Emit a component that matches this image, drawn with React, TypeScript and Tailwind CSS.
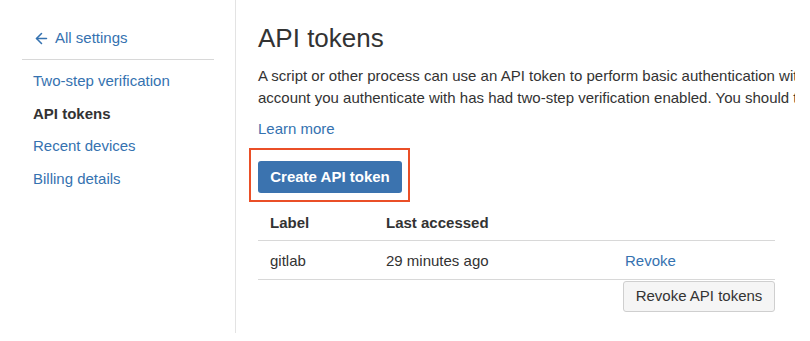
import { ArrowLeft } from "lucide-react";

const font = "font-['Liberation_Sans',Arial,sans-serif]";

export default function App() {
  return (
    <div className={`flex h-[341px] w-[810px] overflow-hidden bg-white text-[15px] text-[#333] ${font}`}>
      {/* Sidebar */}
      <aside className="h-[333px] w-[236px] shrink-0 border-r border-[#e3e3e3] pl-[22px] pr-[21px] pt-[28px]">
        <a className="flex items-center gap-[5px] pl-[11px] leading-[20px] text-[#3572b0]">
          <ArrowLeft className="h-[17px] w-[17px]" strokeWidth={2.2} />
          <span>All settings</span>
        </a>
        <div className="mt-[11px] border-t border-[#d8d8d8]" />
        <nav className="flex flex-col gap-[12.5px] pl-[11px] pt-[11px] leading-[20px]">
          <a className="text-[#3572b0]">Two-step verification</a>
          <span className="font-bold text-[#333]">API tokens</span>
          <a className="text-[#3572b0]">Recent devices</a>
          <a className="text-[#3572b0]">Billing details</a>
        </nav>
      </aside>

      {/* Main */}
      <main className="w-[559px] shrink-0 overflow-hidden pl-[22px] pt-[22px]">
        <h1 className="text-[26px] leading-[32px] text-[#333]">API tokens</h1>
        <p className="mt-[11px] leading-[22px]">
          <span className="block whitespace-nowrap">
            A script or other process can use an API token to perform basic authentication with Jira Cloud applications or Confluence Cloud.
          </span>
          <span className="block whitespace-nowrap">
            account you authenticate with has had two-step verification enabled. You should treat API tokens as securely as any other password.
          </span>
        </p>
        <a className="mt-[10px] block leading-[20px] text-[#3572b0]">Learn more</a>

        <div className="-ml-[9px] mt-[9px] inline-block border-2 border-[#ea4f27] pb-[7px] pl-[7px] pr-[6px] pt-[11px]">
          <button className="h-[32px] w-[144px] rounded-[3px] bg-[#3b73af] font-bold text-white">
            Create API token
          </button>
        </div>

        <div className="w-[517px]">
          <table className="w-full border-collapse text-left">
            <thead>
              <tr className="h-[38px] border-b border-[#d8d8d8]">
                <th className="w-[116px] pl-[12px] pt-[4px] font-bold">Label</th>
                <th className="w-[239px] pl-[12px] pt-[4px] font-bold">Last accessed</th>
                <th />
              </tr>
            </thead>
            <tbody>
              <tr className="h-[39px] border-b border-[#d8d8d8]">
                <td className="pl-[12px] pt-[3px]">gitlab</td>
                <td className="pl-[12px] pt-[3px]">29 minutes ago</td>
                <td className="pl-[12px] pt-[3px] text-[#3572b0]">Revoke</td>
              </tr>
            </tbody>
          </table>
          <div className="mt-[1px] flex justify-end">
            <button className="h-[31px] w-[152px] rounded-[3px] border border-[#cfcfcf] bg-[#f5f5f5] text-[#333]">
              Revoke API tokens
            </button>
          </div>
        </div>
      </main>
    </div>
  );
}
